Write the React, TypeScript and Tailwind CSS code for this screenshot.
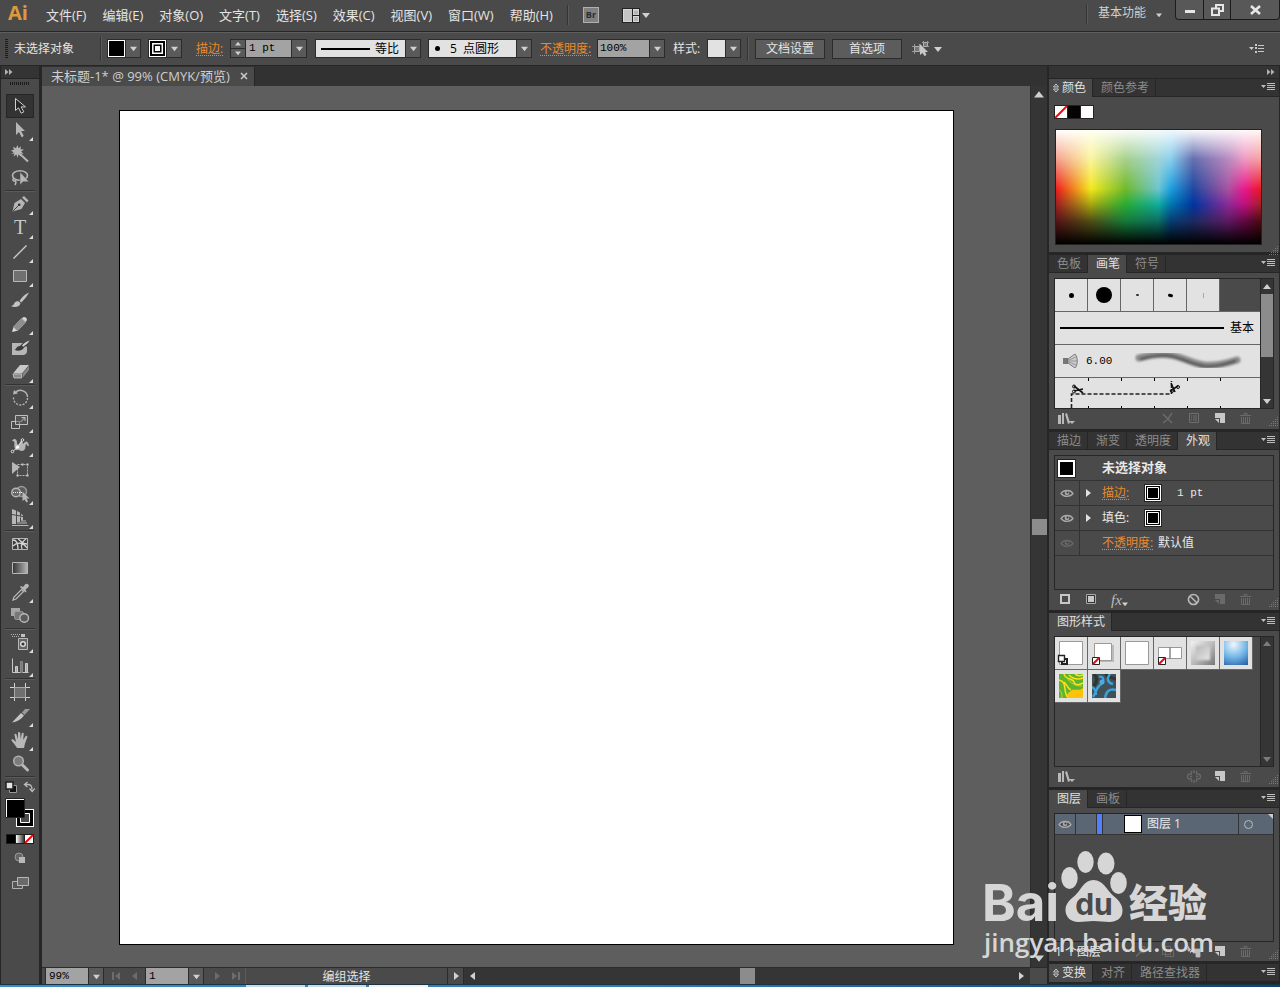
import React from "react";

const UI = "font-['Open_Sans','Noto_Sans_CJK_SC',sans-serif]";
const MONO = "font-['Liberation_Mono','Noto_Sans_CJK_SC',monospace]";

type Kids = { children?: React.ReactNode };

/* ---------- small shared pieces ---------- */

function Caret({ dir = "down", size = 8, className = "text-[#d0d0d0]" }: { dir?: "down" | "up" | "left" | "right"; size?: number; className?: string }) {
  const d = { down: "M0 2h8l-4 5z", up: "M0 6h8L4 1z", left: "M6 0v8L1 4z", right: "M2 0v8l5-4z" }[dir];
  return (
    <svg width={size} height={size} viewBox="0 0 8 8" className={`shrink-0 ${className}`} aria-hidden="true">
      <path d={d} fill="currentColor" />
    </svg>
  );
}

function DoubleArrow() {
  return (
    <svg width="8" height="6" viewBox="0 0 8 6" fill="#b0b0b0" aria-hidden="true">
      <path d="M0 0l3.500 3L0 6zM4 0l3.500 3L4 6z" />
    </svg>
  );
}

function DropButton({ label }: { label: string }) {
  return (
    <button aria-label={label} className="flex h-full w-[15px] shrink-0 items-center justify-center border-l border-[#2b2b2b] bg-[#5a5a5a]">
      <Caret size={7} />
    </button>
  );
}

function Divider({ className = "h-6" }: { className?: string }) {
  return <span className={`w-0.5 shrink-0 border-r border-[#5a5a5a] bg-[#343434] ${className}`} />;
}

function Box({ children, className = "" }: Kids & { className?: string }) {
  return <div className={`flex h-[19px] shrink-0 border border-[#2b2b2b] ${className}`}>{children}</div>;
}

function StrokeSwatch() {
  return (
    <svg width="17" height="17" viewBox="0 0 17 17" aria-hidden="true">
      <path fill="#fff" d="M0 0h17v17H0z" />
      <path d="M1 1h15v15H1z" />
      <path fill="none" stroke="#fff" strokeWidth="1.500" d="M3.800 3.800h9.500v9.500h-9.500z" />
      <path fill="#fff" d="M6 6h5v5H6z" />
    </svg>
  );
}

/* ---------- top bars ---------- */

const menus = ["文件(F)", "编辑(E)", "对象(O)", "文字(T)", "选择(S)", "效果(C)", "视图(V)", "窗口(W)", "帮助(H)"];

function MenuBar() {
  return (
    <header className="flex h-8 shrink-0 items-start border-b border-[#262626] bg-[#4a4a4a] text-[#e4e4e4]">
      <div className="flex h-[30px] items-center">
        <span className="w-[46px] pb-1 pl-2 text-[20px] leading-6 font-bold text-[#dc9a3c] font-['Open_Sans',sans-serif]">Ai</span>
        <nav className="flex gap-4 text-[13px] leading-5">
          {menus.map((m) => (
            <button key={m} className="whitespace-nowrap">{m}</button>
          ))}
        </nav>
        <Divider className="ml-3.5 h-5" />
        <button aria-label="Bridge" className="ml-3.5 flex size-4 items-center justify-center border border-[#b0b0b0] bg-[#808080] text-[9px] leading-3 font-bold text-[#2a2a2a]">
          Br
        </button>
        <button aria-label="排列文档" className="ml-[23px] flex items-center gap-0.5">
          <svg width="18" height="15" viewBox="0 0 18 15" aria-hidden="true">
            <path d="M0 0h18v15H0z" fill="#222" />
            <path d="M1 1h16v13H1z" fill="#d8d8d8" />
            <path d="M2 2h8v11H2z" fill="#c4c4c4" />
            <path d="M10.500 1v13M10.500 7.500H17" stroke="#222" />
            <path d="M12 2.500h4v4h-4zM12 9h4v4h-4z" fill="#b4b4b4" />
          </svg>
          <Caret />
        </button>
      </div>
      <div className="flex-1" />
      <Divider className="mt-1 h-5" />
      <label className="mt-1 ml-2.5 flex items-center text-xs leading-[18px] text-[#cfcfcf]">
        <select aria-label="工作区" className="w-[58px] appearance-none bg-transparent outline-none">
          <option>基本功能</option>
        </select>
        <span className="mt-1 mr-[13px]"><Caret size={6} /></span>
      </label>
      <div className="flex h-5 rounded-b border border-t-0 border-[#1c1c1c] bg-[#585858]">
        <button aria-label="最小化" className="flex w-7 items-center justify-center border-r border-[#1c1c1c]">
          <span className="mt-1 h-[3px] w-2.5 bg-[#e6e6e6]" />
        </button>
        <button aria-label="还原" className="flex w-[27px] items-center justify-center border-r border-[#1c1c1c]">
          <svg width="13" height="12" viewBox="0 0 13 12" fill="none" stroke="#e6e6e6" strokeWidth="2" aria-hidden="true">
            <path d="M5 4V1h7v6H9M1 4.500h7V11H1z" />
          </svg>
        </button>
        <button aria-label="关闭" className="flex w-12 items-center justify-center">
          <svg width="11" height="10" viewBox="0 0 11 10" stroke="#e6e6e6" strokeWidth="2.600" aria-hidden="true">
            <path d="M1 1l9 8M10 1L1 9" />
          </svg>
        </button>
      </div>
    </header>
  );
}

const orange = "text-[#e8892b] underline decoration-dotted underline-offset-2";

function ControlBar() {
  return (
    <section className="flex h-[34px] shrink-0 items-center border-t border-b border-t-[#5e5e5e] border-b-[#262626] bg-[#4a4a4a] pb-px text-xs whitespace-nowrap text-[#e4e4e4]">
      <span className="ml-[5px] h-5 w-[3px] bg-[repeating-linear-gradient(#1c1c1c_0_1px,#4a4a4a_1px_2px)]" />
      <span className="ml-1.5 w-[86px]">未选择对象</span>
      <Divider />
      <Box className="ml-[5px]">
        <span className="size-[17px] border border-white bg-black" />
        <DropButton label="填色" />
      </Box>
      <Box className="ml-[7px]">
        <StrokeSwatch />
        <DropButton label="描边颜色" />
      </Box>
      <label htmlFor="stroke" className={`ml-3.5 w-[34px] ${orange}`}>描边:</label>
      <Box>
        <div className="flex w-[14px] flex-col bg-[#5a5a5a]">
          <button aria-label="增加" className="flex flex-1 items-center justify-center border-b border-[#2b2b2b]"><Caret dir="up" size={6} /></button>
          <button aria-label="减少" className="flex flex-1 items-center justify-center"><Caret size={6} /></button>
        </div>
        <input id="stroke" defaultValue="1 pt" className={`w-[46px] border-l border-[#2b2b2b] bg-[#a3a3a3] pl-[3px] text-[11px] text-black outline-none ${MONO}`} />
        <DropButton label="描边粗细" />
      </Box>
      <Box className="ml-2">
        <button aria-label="变量宽度配置文件" className="flex w-[89px] items-center bg-[#e2e2e2] pl-[5px] text-xs leading-4 text-black">
          <span className="mr-[5px] h-0.5 w-[49px] bg-black" />
          等比
        </button>
        <DropButton label="选择宽度配置文件" />
      </Box>
      <Box className="ml-[7px]">
        <button aria-label="画笔定义" className="flex w-[87px] items-center bg-[#e2e2e2] pl-1.5 text-xs leading-4 text-black">
          <span className="mr-2.5 size-[5px] rounded-full bg-black" />
          5 &nbsp;点圆形
        </button>
        <DropButton label="选择画笔" />
      </Box>
      <label htmlFor="opacity" className={`ml-2 w-[57px] ${orange}`}>不透明度:</label>
      <Box>
        <input id="opacity" defaultValue="100%" className={`w-[51px] bg-[#a3a3a3] pl-0.5 text-[11px] text-black outline-none ${MONO}`} />
        <DropButton label="不透明度" />
      </Box>
      <span className="ml-2 w-[34px]">样式:</span>
      <Box>
        <span className="w-[17px] bg-[#e2e2e2]" />
        <DropButton label="图形样式" />
      </Box>
      <span className="w-1.5" />
      <Divider />
      <button className="ml-1.5 h-5 w-[70px] border border-[#2b2b2b] bg-[#5c5c5c] leading-[18px]">文档设置</button>
      <button className="ml-[7px] h-5 w-[70px] border border-[#2b2b2b] bg-[#5c5c5c] leading-[18px]">首选项</button>
      <button aria-label="选择类似的对象" className="ml-2.5 flex items-center gap-1">
        <svg width="18" height="15" viewBox="0 0 18 15" aria-hidden="true">
          <path d="M2.500 5.500h5v5h-5zM11.500 1.500h4v4h-4z" fill="#777" stroke="#b0b0b0" />
          <path d="M0 5.500h2M0 10.500h2M2.500 3v2M7.500 3v2M2.500 11v2M10 1.500h1M16 1.500h1M16 5.500h1M11.500 0v1M15.500 0v1" stroke="#999" fill="none" />
          <path d="M8 3v11l2.500-2 2 3 2-1-1.500-3h3z" fill="#c8c8c8" />
        </svg>
        <Caret />
      </button>
      <span className="flex-1" />
      <button aria-label="控制面板菜单" className="mr-4">
        <svg width="15" height="9" viewBox="0 0 15 9" fill="#c8c8c8" aria-hidden="true">
          <path d="M0 3h5L2.500 6zM6 0h2v2H6zM9 1h6v1H9zM6 3h2v2H6zM9 4h6v1H9zM6 7h2v2H6zM9 7h6v1H9z" />
        </svg>
      </button>
    </section>
  );
}

/* ---------- toolbox ---------- */

const G = "#b6b6b6";

type Tool = { name: string; more?: boolean; sep?: boolean; icon: React.ReactNode };

const tools: Tool[] = [
  { name: "选择工具", icon: <path d="M7.500 4.500v12l3-2.700 2.700 5.400 2.600-1.300-2.600-5h4.300z" fill="#262626" stroke="#cfcfcf" /> },
  { name: "直接选择工具", more: true, icon: <path d="M8 4v13l3-3 2.600 5.200 2.200-1.100L13.200 13H17z" fill={G} /> },
  {
    name: "魔棒工具",
    icon: (
      <g fill={G}>
        <path d="M9.500 3l1 3.300 2.500-2-.5 3 3.500.2-2.800 2L15.500 12l-3-.5.5 3-2.500-2-1 3.500-1-3.500-3 2 1-3L3 12l2.700-1.500L3 8.500l3-.7-1-3 3 1.500z" />
        <path d="M12 12l8 7.500" stroke={G} strokeWidth="2" />
      </g>
    ),
  },
  {
    name: "套索工具", sep: true,
    icon: (
      <>
        <ellipse cx="12" cy="9.500" rx="7.500" ry="4.800" fill="none" stroke={G} strokeWidth="1.600" />
        <path d="M6 12.500c-2 1-1 3 1 2.500M7 14c1.500 2 1 3.500 0 5" fill="none" stroke={G} strokeWidth="1.500" />
        <path d="M12 6v13l3-3.300h6z" fill={G} stroke="#4a4a4a" strokeWidth=".5" />
      </>
    ),
  },
  {
    name: "钢笔工具", more: true,
    icon: (
      <>
        <path d="M4.500 19.500L6.500 11l6.500-4 4 4-3.500 6z" fill={G} />
        <path d="M14 5.500l2-1.500 4.500 4.500-1.500 2z" fill={G} />
        <path d="M5 19l5.500-5.500" stroke="#444" />
        <circle cx="11.200" cy="12.800" r="1.300" fill="#333" />
      </>
    ),
  },
  { name: "文字工具", more: true, icon: <text x="12" y="18" textAnchor="middle" fontSize="20" fontFamily="Liberation Serif, serif" fill="#c8c8c8">T</text> },
  { name: "直线段工具", more: true, icon: <path d="M5.500 18.500l13-13" stroke="#c8c8c8" strokeWidth="1.400" /> },
  { name: "矩形工具", more: true, icon: <path d="M5.500 6.500h13v11h-13z" fill="#707070" stroke="#b8b8b8" /> },
  {
    name: "画笔工具",
    icon: (
      <g fill="#c4c4c4">
        <path d="M21 4.500c-4 1.500-7.500 5-9.500 8.500l1.800 1.600C16 11.500 19.500 8 21 4.500z" />
        <path d="M10.800 13.500c-3-.8-4.300 1-4.800 2.500-.5 1.200-1.700 1.800-3 2 3 1.800 8.500 1.300 9.500-2.800z" />
      </g>
    ),
  },
  {
    name: "铅笔工具", more: true,
    icon: (
      <>
        <path d="M4 20l1.500-5 4 3.700z" fill="#ddd" />
        <path d="M5.500 15l8-8.500 4 4-8 8.200z" fill="#8e8e8e" stroke="#aaa" strokeWidth=".8" />
        <path d="M14 6.500c1-1.500 2.500-2 4-.7s1 3-.5 4.200z" fill="#d4d4d4" />
      </>
    ),
  },
  {
    name: "斑点画笔工具",
    icon: (
      <>
        <path d="M4 7h10l5 4v4c0 2-1 3-3 4H4z" fill={G} />
        <path d="M20 6c-4 0-6.500 2-8 4-3-.3-3.500 3-5.500 3.800 3.500 1.800 8.500.8 9.500-2.300 2.500-1.500 4-3 5-5.500z" fill="#3c3c3c" />
        <path d="M21.500 4.500c-3.500 1-6 3-7.500 5l1.300 1.200c2.500-1.700 5-3.700 6.200-6.200z" fill="#d0d0d0" />
      </>
    ),
  },
  {
    name: "橡皮擦工具", more: true, sep: true,
    icon: (
      <>
        <path d="M12 5h9l-7 8.500H5z" fill="#c8c8c8" />
        <path d="M5 14h8.500v4H6z" fill="#8a8a8a" stroke="#c8c8c8" strokeWidth=".8" />
        <path d="M14.500 13.700L21 6v4l-6.500 8z" fill="#858585" />
      </>
    ),
  },
  {
    name: "旋转工具", more: true,
    icon: (
      <>
        <path d="M7.500 6.500a7 7 0 0 1 12 4.500" fill="none" stroke={G} strokeWidth="1.400" />
        <path d="M19.500 12a7 7 0 0 1-14 0v-2" fill="none" stroke={G} strokeWidth="1.400" strokeDasharray="2 1.400" />
        <path d="M5 8.500l1-4.500 4 3.500z" fill={G} />
      </>
    ),
  },
  {
    name: "比例缩放工具", more: true,
    icon: (
      <g fill="none" stroke="#c0c0c0">
        <path d="M3.500 11.500h8v7h-8z" />
        <path d="M7.500 5.500h12v9h-12z" fill="#5c5c5c" fillOpacity=".5" />
        <path d="M12.500 12l4.500-4.500M13.500 7.500H17V11" />
      </g>
    ),
  },
  {
    name: "宽度工具", more: true,
    icon: (
      <>
        <path d="M4 7c2-3.500 5-2 5 1.500 0 3 2 2.500 3 0C13 5 15 9 15.500 10c1.500-4 5-3.500 5.500 2h-1.500c-.5-2.500-2-2-2 .5 0 5-5 5.500-7 3C8 18 5.500 14 6.500 9 6 7 5 7 4 7z" fill={G} />
        <path d="M4.500 17.500l5-4 5-7.500" fill="none" stroke="#ddd" />
        <circle cx="4.500" cy="17.500" r="1.300" fill="#444" stroke="#ddd" />
        <circle cx="9.500" cy="13.200" r="1.600" fill="#fff" />
        <circle cx="14.500" cy="6" r="1.300" fill="#444" stroke="#ddd" />
      </>
    ),
  },
  {
    name: "自由变换工具",
    icon: (
      <>
        <path d="M4 4v12l8-7z" fill={G} />
        <path d="M9.500 6.500h10v11h-10z" fill="none" stroke={G} strokeDasharray="2 1" />
        <path d="M8.500 16.500h2v2h-2zM18.500 16.500h2v2h-2zM18.500 5.500h2v2h-2zM13.500 5.500h2v2h-2z" fill="#ccc" />
      </>
    ),
  },
  {
    name: "形状生成器工具", more: true,
    icon: (
      <>
        <circle cx="13.500" cy="9.500" r="5" fill="#5c5c5c" stroke="#999" strokeWidth="1.400" />
        <circle cx="8" cy="10.500" r="4.300" fill="#686868" stroke={G} strokeWidth="1.400" />
        <path d="M5 10.500h10" stroke="#eee" strokeDasharray="1 1" />
        <path d="M14.500 9.500v9.500l2-1.500 2 3 1.500-1-1.500-3h3z" fill={G} />
      </>
    ),
  },
  {
    name: "透视网格工具", more: true, sep: true,
    icon: (
      <>
        <path d="M4 3l4 1.500V18H4zM9 5l3 1.500V16H9zM13 8l2 1v5.500h-2z" fill={G} />
        <path d="M4 19.500h16.500M9 17h10M13 15h5M4 9.500l11 2" stroke={G} />
        <path d="M4 8.500l11 2M8.500 4v14" stroke="#4a4a4a" />
      </>
    ),
  },
  {
    name: "网格工具",
    icon: (
      <>
        <path d="M4.500 6.500h15v11h-15z" fill="#3c3c3c" stroke={G} />
        <path d="M5 8c4 0 5 3 5 9M10 7c4 2 3 5 9 5M14 17c-2-4 1-8 4-10M5 14c4-4 10-4 14 2" fill="none" stroke="#d4d4d4" strokeWidth="1.300" />
      </>
    ),
  },
  {
    name: "渐变工具",
    icon: (
      <>
        <defs>
          <linearGradient id="toolGrad"><stop stopColor="#333" /><stop offset="1" stopColor="#b5b5b5" /></linearGradient>
        </defs>
        <path d="M4.500 6.500h15v11h-15z" fill="url(#toolGrad)" stroke={G} />
      </>
    ),
  },
  {
    name: "吸管工具", more: true,
    icon: (
      <>
        <path d="M5 20l1-3 7.500-7.500 2 2L8 19z" fill="#4a4a4a" stroke="#bbb" strokeWidth="1.200" />
        <path d="M12 7l1-1 2 1 2-2.500c1-1 2.500-1 3.300 0s.7 2-.3 3L17.500 9.500l1 2-1 1z" fill={G} />
      </>
    ),
  },
  {
    name: "混合工具", sep: true,
    icon: (
      <>
        <path d="M3 4h9v8H3z" fill="#a5a5a5" />
        <rect x="6.500" y="7.500" width="9" height="8" rx="2" fill="#777" stroke="#999" />
        <circle cx="16.200" cy="14" r="4.300" fill="#5a5a5a" stroke="#b8b8b8" strokeWidth="1.400" />
      </>
    ),
  },
  {
    name: "符号喷枪工具", more: true,
    icon: (
      <>
        <path d="M10.500 8.500h9v11h-9z" fill="#656565" stroke="#b8b8b8" />
        <path d="M13 4h4v3h-4z" fill="#c0c0c0" />
        <circle cx="15" cy="14" r="2.300" fill="#333" stroke="#d8d8d8" strokeWidth="1.500" />
        <path d="M3 4.500h9M4 6.500h8" stroke="#b0b0b0" strokeDasharray="1 1" />
      </>
    ),
  },
  {
    name: "柱形图工具", more: true, sep: true,
    icon: (
      <>
        <path d="M4.500 4.500v14h16" fill="none" stroke="#c8c8c8" />
        <path d="M7.500 12.500h2v6h-2zM17.500 9.500h2v9h-2z" fill="#aaa" stroke="#ccc" />
        <path d="M12.500 7.500h2v11h-2z" fill="#777" stroke="#888" />
      </>
    ),
  },
  {
    name: "画板工具",
    icon: (
      <>
        <path d="M6.500 3v18M17.500 3v18M2 7.500h20M2 17.500h20" stroke="#d4d4d4" />
        <path d="M6.500 7.500h11v10h-11z" fill="#707070" stroke="#a8a8a8" />
      </>
    ),
  },
  {
    name: "切片工具", more: true,
    icon: (
      <>
        <path d="M4 18.500L13 9l3 2.500c-3 4-7 6.500-12 7z" fill="#c4c4c4" />
        <path d="M14 8.500L17 5h5l-5.500 6z" fill="#999" />
      </>
    ),
  },
  {
    name: "抓手工具", more: true,
    icon: (
      <path
        d="M9 20c-1.500-3-4-5-5.500-7.500-.5-1.200 1-1.800 2-.8L8 14 6.500 7c-.2-1.500 1.500-1.800 2-.5l1.500 5V5c0-1.500 2-1.500 2.200 0l.5 6 1-5.500c.3-1.400 2.200-1 2 .4L15.200 12l2.300-3.700c.8-1.200 2.300-.3 1.800 1L17 15.500 16 20z"
        fill="#b8b8b8"
      />
    ),
  },
  {
    name: "缩放工具", sep: true,
    icon: (
      <>
        <path d="M14 12.500l5.500 5.500" stroke="#b8b8b8" strokeWidth="3" strokeLinecap="round" />
        <circle cx="10.500" cy="9" r="4.800" fill="#7c7c7c" stroke="#b0b0b0" strokeWidth="1.500" />
      </>
    ),
  },
];

function Toolbox() {
  return (
    <aside className="flex w-[42px] shrink-0 flex-col border-r-[3px] border-l border-r-[#262626] border-l-[#262626] bg-[#4a4a4a]">
      <div className="flex h-[13px] items-center border-b border-[#262626] bg-[#343434] pl-1">
        <DoubleArrow />
      </div>
      <span className="mx-auto mt-[3px] mb-[9px] h-[3px] w-5 bg-[repeating-linear-gradient(90deg,#1c1c1c_0_1px,#4a4a4a_1px_2px)]" />
      {tools.map((t, i) => (
        <React.Fragment key={t.name}>
          <button
            aria-label={t.name}
            className={`relative mx-[5px] flex h-6 shrink-0 items-center justify-center ${i === 0 ? "border border-[#262626] bg-[#333]" : ""}`}
          >
            <svg width="24" height="24" viewBox="0 0 24 24" className="shrink-0" aria-hidden="true">{t.icon}</svg>
            {t.more && (
              <svg width="4" height="4" viewBox="0 0 4 4" className="absolute right-px bottom-px" aria-hidden="true">
                <path d="M4 0v4H0z" fill="#dcdcdc" />
              </svg>
            )}
          </button>
          {t.sep && <span className="mx-1 h-0.5 shrink-0 border-t border-[#333] bg-[#5a5a5a]" />}
        </React.Fragment>
      ))}
      <div className="mt-[3px] flex justify-between px-1">
        <svg width="12" height="12" viewBox="0 0 12 12" aria-label="默认填色和描边" role="img">
          <path d="M4.500 4.500h7v7h-7z" fill="#111" stroke="#999" />
          <path d="M1 1h7v7H1z" fill="#e4e4e4" stroke="#222" strokeWidth="1.500" />
        </svg>
        <svg width="12" height="12" viewBox="0 0 12 12" fill="none" stroke="#b8b8b8" strokeWidth="1.300" aria-label="互换填色和描边" role="img">
          <path d="M2 3.500h3c3 0 4 1.500 4 5M4.500 1L1.500 3.500l3 2.500M6.500 7.500l2.700 3 2.700-3" />
        </svg>
      </div>
      <svg width="30" height="30" viewBox="0 0 30 30" className="mx-auto mt-[5px] shrink-0" aria-label="填色和描边" role="img">
        <path d="M11 11h18v18H11z" fill="#fff" />
        <path d="M12 12h16v16H12z" />
        <path d="M15.500 15.500h9v9h-9z" fill="#4a4a4a" stroke="#fff" />
        <path d="M.5.500h19v19H.500z" fill="#fff" stroke="#222" />
        <path d="M2 2h17v17H2z" />
      </svg>
      <svg width="28" height="10" viewBox="0 0 28 10" className="mx-auto mt-1.5 shrink-0" aria-label="颜色 渐变 无" role="img">
        <defs>
          <linearGradient id="bw"><stop stopColor="#fff" /><stop offset="1" stopColor="#333" /></linearGradient>
        </defs>
        <path d="M0 0h28v10H0z" fill="#1c1c1c" />
        <path d="M1 1h8v8H1z" />
        <path d="M10 1h8v8h-8z" fill="url(#bw)" />
        <path d="M19 1h8v8h-8z" fill="#fff" />
        <path d="M19 9l8-8" stroke="#f00" strokeWidth="2" />
      </svg>
      <svg width="12" height="12" viewBox="0 0 12 12" className="mx-auto mt-2 shrink-0" aria-label="绘图模式" role="img">
        <circle cx="5" cy="5" r="4" fill="#666" stroke="#999" />
        <path d="M5 5h6v6H5z" fill="#b8b8b8" />
      </svg>
      <svg width="18" height="14" viewBox="0 0 18 14" className="mx-auto mt-3 mb-4 shrink-0" aria-label="屏幕模式" role="img">
        <path d="M1.500 5.500h10v7h-10z" fill="#555" stroke="#b0b0b0" />
        <path d="M6.500 1.500h11v8h-11z" fill="#6a6a6a" stroke="#b8b8b8" />
      </svg>
    </aside>
  );
}

/* ---------- document window ---------- */

function NavIcon({ d, label }: { d: string; label: string }) {
  return (
    <button aria-label={label} className="flex w-[18px] justify-center">
      <svg width="10" height="8" viewBox="0 0 10 8" fill="#6c6c6c" aria-hidden="true"><path d={d} /></svg>
    </button>
  );
}

function DocumentWindow() {
  return (
    <main className="flex min-w-0 flex-1 flex-col">
      <div className="flex h-5 shrink-0 items-end bg-[#323232]">
        <div className="flex h-[19px] items-center border-r border-[#262626] bg-[#4a4a4a] pr-1.5 pb-0.5 pl-[9px] text-[13px] leading-4 whitespace-nowrap text-[#cfcfcf]">
          未标题-1* @ 99% (CMYK/预览)
          <button aria-label="关闭文档" className="ml-2.5">
            <svg width="8" height="8" viewBox="0 0 8 8" stroke="#ccc" strokeWidth="1.500" aria-hidden="true"><path d="M1 1l6 6M7 1L1 7" /></svg>
          </button>
        </div>
      </div>
      <div className="flex min-h-0 flex-1">
        <div className="flex min-w-0 flex-1 justify-center bg-[#5e5e5e] pt-6 pb-[22px]">
          <div className="aspect-square h-full border border-black bg-white" />
        </div>
        <div className="flex w-[17px] shrink-0 flex-col items-center justify-between border-l border-[#2b2b2b] bg-[#353535] py-1">
          <Caret dir="up" size={10} />
          <span className="h-4 w-[15px] bg-[#8c8c8c]" />
          <Caret size={10} />
        </div>
      </div>
      <footer className="flex h-[17px] shrink-0 items-stretch border-t border-[#2b2b2b] bg-[#4a4a4a]">
        <div className="ml-[3px] flex border-x border-[#2b2b2b]">
          <input aria-label="缩放比例" defaultValue="99%" className={`w-[42px] bg-[#a3a3a3] pl-[3px] text-[11px] text-black outline-none ${MONO}`} />
          <DropButton label="选择缩放比例" />
        </div>
        <div className="flex w-[41px] items-center pl-1">
          <NavIcon label="首项" d="M0 0h2v8H0zM8 0v8L3 4z" />
          <NavIcon label="上一项" d="M7 0v8L2 4z" />
        </div>
        <div className="flex border-x border-[#2b2b2b]">
          <input aria-label="画板导航" defaultValue="1" className={`w-[42px] bg-[#a3a3a3] pl-[3px] text-[11px] text-black outline-none ${MONO}`} />
          <DropButton label="选择画板" />
        </div>
        <div className="flex w-[41px] items-center pl-1">
          <NavIcon label="下一项" d="M3 0v8l5-4z" />
          <NavIcon label="末项" d="M8 0h2v8H8zM2 0v8l5-4z" />
        </div>
        <div className="w-[202px] border-l border-[#5a5a5a] text-center text-xs leading-[18px] text-[#e4e4e4]">编组选择</div>
        <button aria-label="状态栏菜单" className="flex w-[17px] items-center justify-center border-x border-[#2b2b2b]"><Caret dir="right" /></button>
        <div className="flex flex-1 items-center justify-between bg-[#353535] px-[5px]">
          <Caret dir="left" />
          <span className="h-4 w-[15px] bg-[#8c8c8c]" />
          <Caret dir="right" />
        </div>
        <span className="w-[17px] bg-[#4a4a4a]" />
      </footer>
    </main>
  );
}

/* ---------- right dock ---------- */

function Panel({ tabs, active, collapsible, last, className = "", children }: Kids & { tabs: string[]; active: number; collapsible?: boolean; last?: boolean; className?: string }) {
  return (
    <section className={`flex shrink-0 flex-col border-[#262626] bg-[#4a4a4a] ${last ? "border-b-2" : "border-b-[3px]"} ${className}`}>
      <div className="flex h-[18px] shrink-0 bg-[#333]" role="tablist">
        {tabs.map((t, i) => (
          <button
            key={t}
            role="tab"
            aria-selected={i === active}
            className={`flex items-center border-r border-[#262626] pr-1.5 text-xs leading-[18px] whitespace-nowrap ${
              i === active ? "bg-[#4a4a4a] text-[#e0e0e0]" : "border-b text-[#8c8c8c]"
            } ${i === 0 && collapsible ? "gap-[3px] pl-1" : "pl-2"}`}
          >
            {i === 0 && collapsible && (
              <svg width="6" height="10" viewBox="0 0 6 10" fill="none" stroke="#ccc" aria-hidden="true"><path d="M.5 4L3 1l2.500 3zM.5 6L3 9l2.500-3z" /></svg>
            )}
            {t}
          </button>
        ))}
        <div className="flex flex-1 items-center justify-end border-b border-[#262626] pr-1">
          <button aria-label="面板菜单">
            <svg width="14" height="9" viewBox="0 0 14 9" fill="#bdbdbd" aria-hidden="true">
              <path d="M0 2h5L2.500 5zM6 0h8v1H6zM6 2h8v1H6zM6 4h8v1H6zM6 6h8v1H6z" />
            </svg>
          </button>
        </div>
      </div>
      {children}
    </section>
  );
}

function Well({ children, className = "" }: Kids & { className?: string }) {
  return <div className={`mx-[5px] mt-[5px] overflow-hidden border border-[#262626] ${className}`}>{children}</div>;
}

function Grip() {
  return (
    <svg width="11" height="11" viewBox="0 0 11 11" aria-hidden="true">
      <path d="M9 1.500h1M7 3.500h3M5 5.500h5M3 7.500h7M1 9.500h9" stroke="#7a7a7a" strokeDasharray="1 1" />
    </svg>
  );
}

function PanelFooter({ left, right, wide }: { left: React.ReactNode; right: React.ReactNode; wide?: boolean }) {
  return (
    <div className="flex h-[19px] shrink-0 items-center justify-between">
      <div className={`flex items-center ${wide ? "gap-3 pl-2.5" : "pl-2"}`}>{left}</div>
      <div className="flex items-center">
        <div className="flex items-center gap-3 pr-[15px]">{right}</div>
        <span className="mt-1.5"><Grip /></span>
      </div>
    </div>
  );
}

type FootIcon = "library" | "remove" | "options" | "new" | "newOff" | "trash" | "square" | "fill" | "none" | "unlink" | "search" | "mask" | "sub";

function Foot({ kind }: { kind: FootIcon }) {
  const art: Record<FootIcon, React.ReactNode> = {
    library: <path d="M1 3h3v9H1zM5 1h2v11H5zM8 2l2-1 3 10-2 1zM12 9h6l-3 3z" fill="#b8b8b8" />,
    remove: <path d="M2 2l9 9M11 1L7 7l-5 4" stroke="#6a6a6a" strokeWidth="1.500" fill="none" />,
    options: <path d="M2.500 1.500h9v9h-9zM4 4h1M6 4h4M4 6h1M6 6h4M4 8h1M6 8h4" stroke="#6e6e6e" fill="none" />,
    new: <path d="M2 1h10v10H7V6H2zM2 7l4 4V7z" fill="#c8c8c8" />,
    newOff: <path d="M2 1h10v10H7V6H2zM2 7l4 4V7z" fill="#6a6a6a" />,
    trash: <path d="M1 3.500h11M5 3V1.500h3V3M2.500 5v6.500h8V5M4.500 5v6M6.500 5v6M8.500 5v6" stroke="#6a6a6a" fill="none" />,
    square: <path d="M2 2h8v8H2z" stroke="#c8c8c8" strokeWidth="2" fill="none" />,
    fill: (
      <>
        <path d="M1.500 1.500h9v9h-9z" stroke="#a8a8a8" fill="#333" />
        <path d="M3 3h6v6H3z" fill="#c8c8c8" />
      </>
    ),
    none: <path d="M6.500 1.500a5 5 0 1 0 .01 0M3 3l7 7" stroke="#b8b8b8" strokeWidth="1.600" fill="none" />,
    unlink: <path d="M5 4H3a2.500 2.500 0 0 0 0 5h2M9 4h2a2.500 2.500 0 0 1 0 5H9M3 6.500h2M9 6.500h2M7 0v3M7 10v3M4 1l1 2M10 1L9 3M4 12l1-2M10 12l-1-2" stroke="#6a6a6a" strokeWidth="1.300" fill="none" />,
    search: <path d="M7.500 1.500a3 3 0 1 0 .01 0M5.500 7L1 11.500" stroke="#6a6a6a" strokeWidth="1.500" fill="none" />,
    mask: <path d="M1.500 1.500h8v8h-8zM4.500 4.500h8v7h-8z" stroke="#6a6a6a" fill="none" />,
    sub: <path d="M6 4h7v8H9V8H6zM1 1v5h4M3 4l2 2-2 2" stroke="#bdbdbd" strokeWidth=".8" fill="#bdbdbd" />,
  };
  return <svg width={kind === "library" ? 18 : 14} height="13" viewBox={kind === "library" ? "0 0 18 13" : "0 0 14 13"} aria-hidden="true">{art[kind]}</svg>;
}

/* Horizontal colour rows of the CMYK spectrum, blended downwards. */
const xs = [0, 0.17, 0.34, 0.5, 0.56, 0.67, 0.84, 0.92, 1];
const rows: { y: number; c: string[] }[] = [
  { y: 0, c: ["#fff", "#fffff4", "#fbfdf8", "#f4fbfc", "#eef9fe", "#fafafd", "#fdf8fb", "#fff8fb", "#fff8f6"] },
  { y: 0.25, c: ["#f5a391", "#fbf5a0", "#a8d18d", "#a0d5d8", "#8bd0ef", "#6670b0", "#b98cc0", "#f09cc4", "#f5a3a0"] },
  { y: 0.52, c: ["#ed1c1c", "#f3e81c", "#6fb92c", "#6cc5d0", "#1b9fe0", "#2048a0", "#a8529f", "#e8188c", "#ec1620"] },
  { y: 0.65, c: ["#a01f22", "#a8a810", "#2aad35", "#10aca0", "#0078b0", "#0035a0", "#8c2a98", "#c01080", "#a82025"] },
  { y: 0.8, c: ["#541416", "#4f4d15", "#147a3a", "#0c6c60", "#063c70", "#1c2a60", "#5c1a60", "#600840", "#4a0a10"] },
  { y: 1, c: ["#000", "#000", "#000", "#000", "#000", "#000", "#000", "#000", "#000"] },
];

function Spectrum() {
  return (
    <svg viewBox="0 0 205 114" preserveAspectRatio="none" className="block h-full w-full" role="img" aria-label="CMYK 色谱">
      <defs>
        {rows.map((r, i) => (
          <React.Fragment key={r.y}>
            <linearGradient id={`hue${i}`}>
              {xs.map((x, k) => <stop key={x} offset={x} stopColor={r.c[k]} />)}
            </linearGradient>
            {i > 0 && (
              <>
                <linearGradient id={`fade${i}`} x1="0" y1="0" x2="0" y2="1">
                  <stop offset={rows[i - 1].y} stopColor="#fff" stopOpacity="0" />
                  <stop offset={r.y} stopColor="#fff" stopOpacity="1" />
                </linearGradient>
                <mask id={`mask${i}`} style={{ maskType: "alpha" }}>
                  <rect width="205" height="114" fill={`url(#fade${i})`} />
                </mask>
              </>
            )}
          </React.Fragment>
        ))}
      </defs>
      {rows.map((r, i) => (
        <rect key={r.y} width="205" height="114" fill={`url(#hue${i})`} mask={i > 0 ? `url(#mask${i})` : undefined} />
      ))}
    </svg>
  );
}

function ColorPanel() {
  return (
    <Panel tabs={["颜色", "颜色参考"]} active={0} collapsible className="h-44">
      <svg width="40" height="14" viewBox="0 0 40 14" className="mt-2 ml-[5px] shrink-0" role="img" aria-label="无 黑 白">
        <path d="M0 0h40v14H0z" fill="#222" />
        <path d="M1 1h12v12H1zM27 1h12v12H27z" fill="#fff" />
        <path d="M14 1h12v12H14z" fill="#080303" />
        <path d="M1 13L13 1" stroke="#f00" strokeWidth="2" />
      </svg>
      <div className="mt-2.5 mr-[17px] ml-1.5 h-[116px] shrink-0 border border-[#222]"><Spectrum /></div>
      <span className="mt-auto ml-auto"><Grip /></span>
    </Panel>
  );
}

function BrushPanel() {
  const cell = "flex h-8 w-[33px] items-center justify-center border-r border-[#666] bg-[#e2e2e2]";
  return (
    <Panel tabs={["色板", "画笔", "符号"]} active={1} className="h-[177px]">
      <Well className="flex h-[131px]">
        <div className="min-w-0 flex-1">
          <div className="flex">
            <div className={cell}><span className="size-[5px] rounded-full bg-black" /></div>
            <div className={cell}><span className="size-4 rounded-full bg-black" /></div>
            <div className={cell}><span className="h-0.5 w-[3px] rounded-full bg-[#333]" /></div>
            <div className={cell}><span className="h-[3px] w-[5px] rotate-12 rounded-full bg-black" /></div>
            <div className={cell}><span className="h-[5px] w-px bg-[#aaa]" /></div>
          </div>
          <div className="flex h-[33px] items-center gap-1.5 border-t border-[#666] bg-[#e2e2e2] pr-1.5 pl-[5px] text-xs text-black">
            <span className="h-0.5 flex-1 bg-black" />
            基本
          </div>
          <div className="flex h-[33px] items-center border-t border-[#666] bg-[#e2e2e2] pl-2 text-black">
            <svg width="16" height="16" viewBox="0 0 16 16" aria-hidden="true">
              <path d="M0 5h5v6H0z" fill="#777" />
              <path d="M5 6l7-5c3 3 3 11 0 14l-7-5z" fill="#ccc" stroke="#666" strokeWidth=".8" />
              <path d="M6 7l7-3M6 8h8M6 9l7 3" stroke="#777" strokeWidth=".6" />
            </svg>
            <span className={`ml-[7px] text-[11px] ${MONO}`}>6.00</span>
            <svg width="110" height="24" viewBox="0 0 110 24" className="ml-[22px]" aria-hidden="true">
              <defs><filter id="soft"><feGaussianBlur stdDeviation="1" /></filter></defs>
              <g fill="none" strokeLinecap="round" filter="url(#soft)">
                <path d="M5 9C42-1 48 13 70 16c14 1 24-2 33-5" stroke="#8b8b8b" strokeWidth="7" />
                <path d="M7 10C42 0 48 14 70 17c14 1 22-2 31-5" stroke="#555" strokeWidth="2.500" />
              </g>
            </svg>
          </div>
          <svg viewBox="0 0 205 32" className="block h-8 w-full border-t border-[#666] bg-[#e2e2e2]" preserveAspectRatio="xMinYMin slice" aria-hidden="true">
            <path d="M33.500 0v3M66.500 0v3M99.500 0v3M132.500 0v3M165.500 0v3M33.500 28v3M66.500 28v3M99.500 28v3M132.500 28v3M165.500 28v3" stroke="#000" />
            <path d="M16.500 30V16h100V3" fill="none" stroke="#222" strokeWidth="1.600" strokeDasharray="4 2" />
            <path d="M19 8l9 7M19 13l9-2M116 5l4 9M115 13l8-5" stroke="#111" strokeWidth="1.600" />
            <g fill="none" stroke="#111"><circle cx="19" cy="8.500" r="1.500" /><circle cx="19" cy="13.500" r="1.500" /><circle cx="117" cy="13" r="1.500" /><circle cx="123" cy="9" r="1.500" /></g>
          </svg>
        </div>
        <div className="flex w-[13px] shrink-0 flex-col items-center border-l border-[#262626] bg-[#353535]">
          <span className="flex h-[15px] items-center"><Caret dir="up" /></span>
          <span className="h-[63px] w-full bg-[#8c8c8c]" />
          <span className="mt-auto mb-[3px]"><Caret /></span>
        </div>
      </Well>
      <PanelFooter left={<Foot kind="library" />} right={<><Foot kind="remove" /><Foot kind="options" /><Foot kind="new" /><Foot kind="trash" /></>} />
    </Panel>
  );
}

function Eye({ dim }: { dim?: boolean }) {
  return (
    <svg width="14" height="10" viewBox="0 0 14 10" opacity={dim ? 0.3 : 1} aria-hidden="true">
      <path d="M1 5.500C3 2 10.500 1 13 5.500 10.500 9 4 9.500 1 5.500z" fill="#4a4a4a" stroke="#a8a8a8" strokeWidth="1.300" />
      <circle cx="7" cy="5" r="2.300" fill="#a8a8a8" />
      <circle cx="7.500" cy="4.500" r="1" fill="#333" />
    </svg>
  );
}

function PaintSwatch() {
  return (
    <svg width="18" height="18" viewBox="0 0 18 18" aria-hidden="true">
      <path d="M0 0h18v18H0z" fill="#222" /><path d="M1 1h16v16H1z" fill="#fff" />
      <path d="M2 2h14v14H2z" /><path d="M3.500 3.500h11v11h-11z" stroke="#fff" />
    </svg>
  );
}

function AppearanceRow({ eye, dim, arrow, children }: Kids & { eye?: boolean; dim?: boolean; arrow?: boolean }) {
  return (
    <div className="flex h-[25px] items-center border-b border-[#333]">
      <span className="flex h-full w-[25px] items-center justify-center border-r border-[#333]">{eye && <Eye dim={dim} />}</span>
      <span className="flex w-[22px] pl-1">{arrow && <Caret dir="right" className="text-[#e0e0e0]" />}</span>
      {children}
    </div>
  );
}

function AppearancePanel() {
  return (
    <Panel tabs={["描边", "渐变", "透明度", "外观"]} active={3} className="h-[181px]">
      <Well className="h-[135px] text-xs text-[#e8e8e8]">
        <div className="flex h-[25px] items-center border-b border-[#333] pl-0.5">
          <span className="size-[19px] border border-[#222] bg-white p-0.5"><span className="block h-full bg-black" /></span>
          <strong className="ml-[26px] text-[13px]">未选择对象</strong>
        </div>
        <AppearanceRow eye arrow>
          <button className={`w-[42px] text-left ${orange}`}>描边:</button>
          <PaintSwatch />
          <span className={`ml-[15px] text-[11px] ${MONO}`}>1 pt</span>
        </AppearanceRow>
        <AppearanceRow eye arrow>
          <span className="w-[42px]">填色:</span>
          <PaintSwatch />
        </AppearanceRow>
        <AppearanceRow eye dim>
          <button className={`w-14 text-left ${orange}`}>不透明度:</button>
          <span>默认值</span>
        </AppearanceRow>
      </Well>
      <PanelFooter
        wide
        left={<><Foot kind="square" /><Foot kind="fill" /><span className="flex items-center text-[15px] leading-4 text-[#bdbdbd] italic font-['Liberation_Serif',serif]">fx<span className="mt-2"><Caret size={6} /></span></span></>}
        right={<><Foot kind="none" /><Foot kind="newOff" /><Foot kind="trash" /></>}
      />
    </Panel>
  );
}

const noneMark = (
  <>
    <path d="M4.500 20.500h7v7h-7z" fill="#fff" stroke="#222" />
    <path d="M5 27l6-6" stroke="#e0101c" strokeWidth="2.200" />
  </>
);

const styleArt: React.ReactNode[] = [
  <>
    <path d="M4.500 4.500h23v23h-23z" fill="#fff" stroke="#999" />
    <path d="M7 22h5v5H7z" fill="#fff" stroke="#222" strokeWidth="2" />
    <path d="M3.500 18.500h6v6h-6z" fill="#fff" stroke="#222" strokeWidth="1.400" />
  </>,
  <>
    <path d="M8 8h18v17H8z" fill="#bbb" />
    <path d="M6.500 6.500h17v17h-17z" fill="#fff" stroke="#a09890" />
    {noneMark}
  </>,
  <path d="M4.500 4.500h23v23h-23z" fill="#fff" stroke="#999" />,
  <>
    <path d="M4.500 10.500h23v11h-23z" fill="#fff" stroke="#999" />
    <path d="M16 10v12" stroke="#888" strokeWidth="1.500" />
    {noneMark}
  </>,
  <>
    <defs>
      <linearGradient id="steel" x2="1" y2="1"><stop stopColor="#f2f2f2" /><stop offset=".5" stopColor="#bbb" /><stop offset="1" stopColor="#777" /></linearGradient>
      <linearGradient id="steel2" x2="1" y2="1"><stop stopColor="#b8b8b8" /><stop offset="1" stopColor="#e6e6e6" /></linearGradient>
      <filter id="soft2"><feGaussianBlur stdDeviation="1.200" /></filter>
    </defs>
    <path d="M4 4h24v24H4z" fill="url(#steel)" />
    <path d="M9 9h14v14H9z" fill="url(#steel2)" filter="url(#soft2)" />
  </>,
  <>
    <defs>
      <radialGradient id="sky" cx=".4" cy=".15" r="1"><stop stopColor="#f0f8fe" /><stop offset=".55" stopColor="#6fb4e6" /><stop offset="1" stopColor="#2a5fa4" /></radialGradient>
    </defs>
    <path d="M4 4h24v24H4z" fill="url(#sky)" />
  </>,
  <>
    <path d="M4 4h24v24H4z" fill="#5fb32d" />
    <path d="M12 28c-1-5 3-6 5-8s6 2 11-2v10z" fill="#fdc20a" />
    <path d="M4 10c8 2 4 8 8 17M9 4c1 6 9 4 10 8s5 3 9 1M14 5c4 4 9 5 14 3M20 4c2 2 5 2 8 1M9 12c3 2 3 6 7 8" fill="none" stroke="#ffe21a" strokeWidth="1.500" />
    <path d="M4 20c3 1 3 5 3 8M12 8c4 6 9 8 15 8" fill="none" stroke="#c7dc22" />
  </>,
  <>
    <defs><clipPath id="tile"><path d="M4 4h24v24H4z" /></clipPath></defs>
    <g clipPath="url(#tile)">
      <path d="M4 4h24v24H4z" fill="#405258" />
      <path d="M6 4c4 4 3 8 0 12M18 4c1 5 8 2 10 6" fill="none" stroke="#30352e" strokeWidth="3" />
      <path d="M11 7c5-2 6 5 1 8-4 3-4 8-7 12M28 20c-7-2-10 2-11 8M4 17c2 1 4 4 4 8M22 4c-4 5-2 9 3 10" fill="none" stroke="#3f9fd8" strokeWidth="2.400" />
      <circle cx="14" cy="12" r="2.500" fill="#4cabe4" />
    </g>
  </>,
];

function StylesPanel() {
  return (
    <Panel tabs={["图形样式"]} active={0} className="h-[177px]">
      <Well className="flex h-[131px]">
        <div className="flex flex-1 flex-wrap content-start">
          {styleArt.map((art, i) => (
            <button key={i} aria-label={`图形样式 ${i + 1}`} className="size-[33px] border-r border-b border-[#666] bg-[#e2e2e2]">
              <svg width="32" height="32" viewBox="0 0 32 32" aria-hidden="true">{art}</svg>
            </button>
          ))}
        </div>
        <div className="flex w-[13px] shrink-0 flex-col items-center justify-between border-l border-[#262626] bg-[#353535] py-[3px]">
          <Caret dir="up" className="text-[#7c7c7c]" />
          <Caret className="text-[#7c7c7c]" />
        </div>
      </Well>
      <PanelFooter left={<Foot kind="library" />} right={<><Foot kind="unlink" /><Foot kind="new" /><Foot kind="trash" /></>} />
    </Panel>
  );
}

function LayersPanel() {
  return (
    <Panel tabs={["图层", "画板"]} active={0} className="min-h-[100px] flex-1">
      <Well className="flex-1">
        <div className="flex h-[21px] items-center border-b border-[#333] bg-[#5b6675] text-xs text-[#ececec]">
          <span className="flex h-full w-[21px] items-center justify-center border-r border-[#333]"><Eye /></span>
          <span className="h-full w-[21px] border-r border-[#333]" />
          <span className="h-full w-1.5 border-r border-[#333] bg-[#4f80ff]" />
          <span className="ml-[21px] size-[18px] border border-black bg-white" />
          <span className="ml-[5px] flex-1">图层 1</span>
          <span className="relative flex h-full w-[35px] items-center border-l border-[#333] pl-[5px]">
            <span className="size-[9px] rounded-full border border-[#bbb]" />
            <svg width="5" height="5" viewBox="0 0 5 5" className="absolute top-0 right-0" aria-hidden="true"><path d="M0 0h5v5z" fill="#ccc" /></svg>
          </span>
        </div>
      </Well>
      <PanelFooter
        left={<span className="-ml-0.5 text-xs leading-4 text-[#e8e8e8]">1 个图层</span>}
        right={<><Foot kind="search" /><Foot kind="mask" /><Foot kind="sub" /><Foot kind="new" /><Foot kind="trash" /></>}
      />
    </Panel>
  );
}

function Dock() {
  return (
    <aside className="flex w-[233px] shrink-0 flex-col border-r border-l-2 border-[#262626]">
      <div className="flex h-[13px] shrink-0 items-center justify-end border-b border-[#262626] bg-[#343434] pr-1">
        <DoubleArrow />
      </div>
      <ColorPanel />
      <BrushPanel />
      <AppearancePanel />
      <StylesPanel />
      <LayersPanel />
      <Panel tabs={["变换", "对齐", "路径查找器"]} active={0} collapsible last />
    </aside>
  );
}

function Watermark() {
  return (
    <svg width="240" height="116" viewBox="0 0 240 116" className="pointer-events-none absolute right-[66px] bottom-[23px]" fill="#d6d6d6" role="img" aria-label="Baidu 经验 jingyan.baidu.com">
      <text x="8" y="73" fontSize="51" fontWeight="700" fontFamily="Inter, sans-serif">Bai</text>
      <ellipse cx="95.500" cy="30" rx="8.200" ry="11" />
      <ellipse cx="111.500" cy="14" rx="8.200" ry="11" />
      <ellipse cx="132" cy="15.500" rx="8.500" ry="11" />
      <ellipse cx="144.500" cy="35" rx="8.300" ry="11" />
      <path d="M119.500 32c10 0 13 10 20 16 6 5 9 9 9 15 0 7-6 11-13 11-6 0-10-1-16-1s-9 1-15 1c-8 0-13-5-13-12 0-6 4-10 9-14 7-6 9-16 19-16z" />
      <text x="120" y="67" textAnchor="middle" fontSize="30" fontWeight="700" fontFamily="Inter, sans-serif" fill="#4a4a4a">du</text>
      <text x="155" y="69" fontSize="39" fontWeight="900" fontFamily="Noto Sans CJK SC, sans-serif">经验</text>
      <text x="10" y="104" fontSize="26" fontWeight="600" fontFamily="Open Sans, sans-serif">jingyan.baidu.com</text>
    </svg>
  );
}

export default function App() {
  return (
    <div className={`relative flex h-screen min-h-[960px] flex-col overflow-hidden bg-[#262626] ${UI}`}>
      <MenuBar />
      <ControlBar />
      <div className="flex min-h-0 flex-1">
        <Toolbox />
        <DocumentWindow />
        <Dock />
      </div>
      <div className="flex h-[3px] shrink-0 gap-[3px] border-t border-[#1c3344] bg-linear-to-r from-[#3a8fc8] via-[#2f7ab5] to-[#123f78] pl-[246px]">
        <span className="w-[59px] bg-[#c4dcec]" />
        <span className="w-[58px] bg-[#c4dcec]" />
        <span className="w-[59px] bg-[#f0f0f0]" />
      </div>
      <Watermark />
    </div>
  );
}
